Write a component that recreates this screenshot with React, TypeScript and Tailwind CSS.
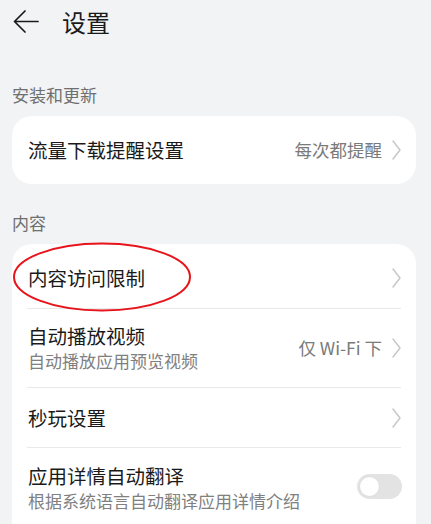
import React from "react";

const Chevron = () => (
  <svg width="12" height="24" viewBox="0 0 12 24" className="shrink-0">
    <path d="M3 3 L10 12 L3 21" fill="none" stroke="#c8c8c8" strokeWidth="1.5" strokeLinecap="round" strokeLinejoin="round" />
  </svg>
);

const Divider = () => <div className="mx-[15px] h-px bg-[#e8e8e8]" />;

export default function App() {
  return (
    <div
      className="relative w-[431px] h-[524px] overflow-hidden bg-[#f1f3f5] text-[#1a1a1a]"
      style={{ fontFamily: '"Noto Sans CJK SC", "Noto Sans", sans-serif' }}
    >
      {/* Title bar */}
      <div className="h-[44px] flex items-center">
        <svg width="26" height="24" viewBox="0 0 26 24" className="ml-[13px]">
          <path d="M2 11.5 H25 M12 1 L1.5 11.5 L12 22" fill="none" stroke="#1a1a1a" strokeWidth="1.7" strokeLinecap="round" strokeLinejoin="round" />
        </svg>
        <span className="ml-[23px] text-[24px] leading-[32px]">设置</span>
      </div>

      {/* Section header 1 */}
      <div className="pt-[39px] pb-[10px] px-[12px] text-[17px] leading-[23px] text-[#6f6f6f]">安装和更新</div>

      {/* Card 1 */}
      <div className="ml-[12px] w-[404px] rounded-[20px] bg-white py-[4px]">
        <div className="h-[60px] flex items-center pl-[16px] pr-[14px]">
          <span className="flex-1 text-[19.5px] leading-[26px]">流量下载提醒设置</span>
          <span className="text-[17.5px] leading-[24px] text-[#7a7a7a] mr-[8px]">每次都提醒</span>
          <Chevron />
        </div>
      </div>

      {/* Section header 2 */}
      <div className="pt-[27px] pb-[10px] px-[12px] text-[17px] leading-[23px] text-[#6f6f6f]">内容</div>

      {/* Card 2 */}
      <div className="ml-[12px] w-[404px] rounded-t-[20px] bg-white pt-[4px]">
        <div className="h-[60px] flex items-center pl-[16px] pr-[14px]">
          <span className="flex-1 text-[19.5px] leading-[26px]">内容访问限制</span>
          <Chevron />
        </div>
        <Divider />
        <div className="h-[78px] flex items-center pl-[16px] pr-[14px]">
          <div className="flex-1 flex flex-col">
            <span className="text-[19.5px] leading-[26px]">自动播放视频</span>
            <span className="text-[17px] leading-[24px] text-[#808080]">自动播放应用预览视频</span>
          </div>
          <span className="text-[17.5px] leading-[24px] text-[#7a7a7a] mr-[8px]">仅 Wi-Fi 下</span>
          <Chevron />
        </div>
        <Divider />
        <div className="h-[59px] flex items-center pl-[16px] pr-[14px]">
          <span className="flex-1 text-[19.5px] leading-[26px]">秒玩设置</span>
          <Chevron />
        </div>
        <Divider />
        <div className="h-[80px] flex items-center pl-[16px] pr-[14px]">
          <div className="flex-1 flex flex-col">
            <span className="text-[19.5px] leading-[26px]">应用详情自动翻译</span>
            <span className="text-[17px] leading-[24px] text-[#808080]">根据系统语言自动翻译应用详情介绍</span>
          </div>
          <div className="w-[45px] h-[25px] rounded-full bg-[#e3e3e3] flex items-center px-[2px] -mt-[3px]">
            <div className="w-[21px] h-[21px] rounded-full bg-white border border-[#dcdcdc]" />
          </div>
        </div>
      </div>

      {/* Red annotation ellipse */}
      <svg className="absolute left-0 top-0 pointer-events-none" width="431" height="524">
        <ellipse cx="102" cy="277" rx="88" ry="33.5" fill="none" stroke="#e8141b" strokeWidth="2" />
      </svg>
    </div>
  );
}
